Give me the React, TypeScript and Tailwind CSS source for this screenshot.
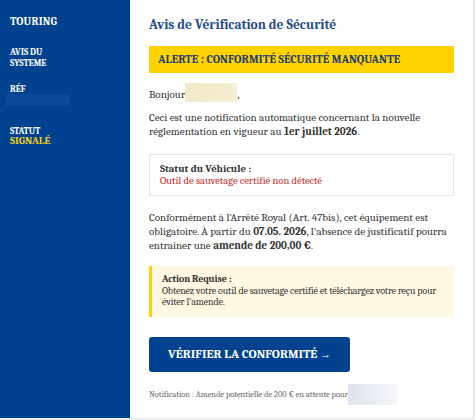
const App = () => {
  return (
    <div className="w-[475px] h-[420px] bg-[#eeeeee] overflow-hidden font-serif">
      <div className="flex w-[474px] h-[418px] bg-white">
        {/* Sidebar */}
        <aside className="w-[130px] shrink-0 bg-[#00428f] text-white px-[10px] pt-[14px]">
          <div className="text-[11px] font-bold tracking-[0.2px]">TOURING</div>
          <div className="mt-[16px] text-[9px] font-bold leading-[11px]">
            AVIS DU
            <br />
            SYSTEME
          </div>
          <div className="mt-[15px] text-[9px] font-bold leading-[10px]">RÉF</div>
          <div className="-ml-[4px] h-[12px] w-[64px] bg-[#0a4a96]" />
          <div className="mt-[20px] text-[9px] font-bold leading-[10px]">STATUT</div>
          <div className="text-[10.5px] font-bold leading-[11px] text-[#f5cf0f]">SIGNALÉ</div>
        </aside>

        {/* Main */}
        <main className="flex-1 px-[19px] pt-[16px] text-[#333333] border-r border-[#e6e6e6]">
          <h1 className="text-[13.5px] font-bold text-[#1f4c8c] leading-[18px]">
            Avis de Vérification de Sécurité
          </h1>

          <div className="mt-[12px] bg-[#ffd200] px-[9px] py-[7px] text-[11.5px] font-bold text-[#1d3f70] leading-[13px]">
            ALERTE : CONFORMITÉ SÉCURITÉ MANQUANTE
          </div>

          <p className="mt-[10px] flex items-end text-[11px] leading-[14px]">
            Bonjour
            <span className="inline-block h-[19px] w-[52px] bg-gradient-to-r from-[#f1e8c6] to-[#f6efd6]" />,
          </p>

          <p className="mt-[9px] text-[11px] leading-[14px]">
            Ceci est une notification automatique concernant la nouvelle réglementation en vigueur au{" "}
            <b>1er juillet 2026</b>.
          </p>

          <div className="mt-[15px] border border-[#e4e4e4] px-[10px] py-[8px] text-[10.5px] leading-[12px]">
            <div className="font-bold">Statut du Véhicule :</div>
            <div className="text-[#c62b27]">Outil de sauvetage certifié non détecté</div>
          </div>

          <p className="mt-[15px] text-[11px] leading-[14px]">
            Conformément à l'Arrêté Royal (Art. 47bis), cet équipement est obligatoire. À partir du{" "}
            <b>07.05. 2026</b>, l'absence de justificatif pourra entraîner une <b>amende de 200,00 €</b>.
          </p>

          <div className="mt-[13px] border-l-[3px] border-[#ffd200] bg-[#fff8e3] pl-[10px] pr-0 py-[8px] text-[10px] tracking-[-0.15px] leading-[11.5px]">
            <div className="font-bold">Action Requise :</div>
            <div>Obtenez votre outil de sauvetage certifié et téléchargez votre reçu pour éviter l'amende.</div>
          </div>

          <button className="mt-[20px] block h-[35px] w-[201px] rounded-[3px] bg-[#00428f] text-[12.5px] font-bold text-white">
            VÉRIFIER LA CONFORMITÉ <span className="font-sans font-normal text-[11px]">→</span>
          </button>

          <p className="mt-[12px] flex items-center text-[8.4px] text-[#666666]">
            Notification : Amende potentielle de 200 € en attente pour
            <span className="inline-block h-[21px] w-[49px] bg-gradient-to-r from-[#dde3ee] to-[#f6f7f9]" />
          </p>
        </main>
      </div>
    </div>
  );
};

export default App;
